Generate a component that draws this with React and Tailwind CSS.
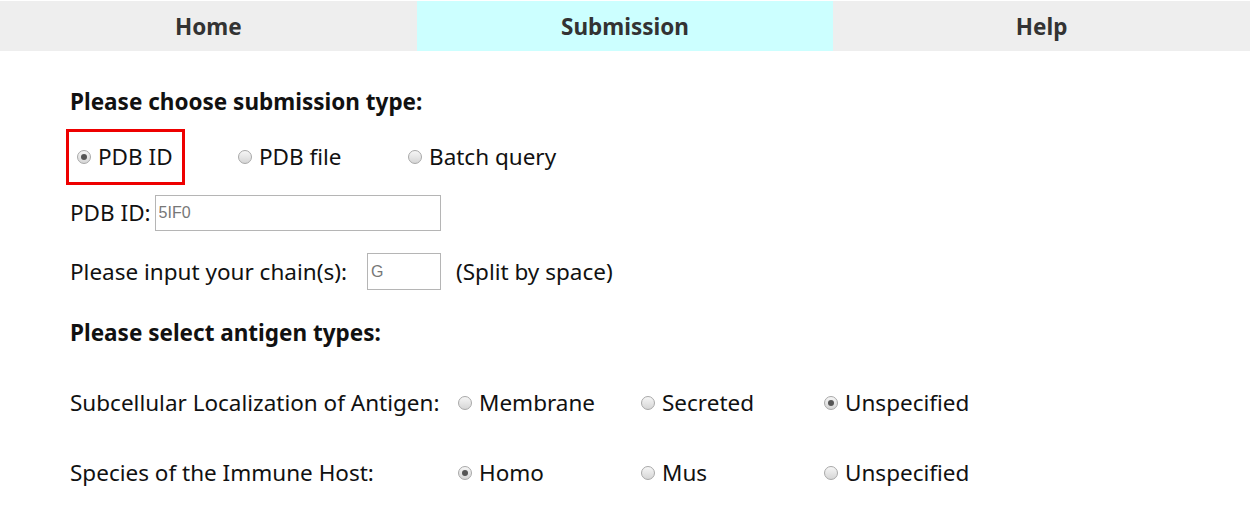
import { useState } from "react";

const font = { fontFamily: '"Noto Sans", "Open Sans", sans-serif' };

function Radio({ checked, label, onChange }) {
  return (
    <label className="flex items-center gap-[7px] cursor-pointer">
      <span
        className="w-[14px] h-[14px] rounded-full border border-[#a8a8a8] bg-gradient-to-b from-[#f6f6f6] to-[#d6d6d6] flex items-center justify-center"
        onClick={onChange}
      >
        {checked && <span className="w-[6px] h-[6px] rounded-full bg-[#555]" />}
      </span>
      <span>{label}</span>
    </label>
  );
}

function RadioRow({ title, options, value, setValue }) {
  return (
    <div className="flex items-center h-[40px]">
      <div className="w-[388px] shrink-0">{title}</div>
      {options.map((o) => (
        <div key={o} className="w-[183px]">
          <Radio checked={value === o} label={o} onChange={() => setValue(o)} />
        </div>
      ))}
    </div>
  );
}

export default function App() {
  const [type, setType] = useState("PDB ID");
  const [loc, setLoc] = useState("Unspecified");
  const [host, setHost] = useState("Homo");
  const tabs = ["Home", "Submission", "Help"];

  return (
    <div className="bg-white min-h-[520px] text-[#111] text-[22.5px] leading-[30px]" style={font}>
      <nav className="grid grid-cols-3 bg-[#eeeeee] mt-[1px] h-[50px]">
        {tabs.map((t) => (
          <a
            key={t}
            className={
              "flex items-center justify-center pt-[1px] font-bold text-[22.5px] text-[#333] " +
              (t === "Submission" ? "bg-[#ccffff]" : "")
            }
          >
            {t}
          </a>
        ))}
      </nav>

      <div className="pl-[70px] pt-[36px]">
        <h2 className="font-bold leading-[30px]">Please choose submission type:</h2>

        <div className="flex items-center mt-[12px] h-[56px] -ml-[4px]">
          <div className="border-[3px] border-[#ee0000] h-[56px] w-[119px] flex items-center pl-[8px]">
            <Radio checked={type === "PDB ID"} label="PDB ID" onChange={() => setType("PDB ID")} />
          </div>
          <div className="ml-[53px] w-[170px]">
            <Radio checked={type === "PDB file"} label="PDB file" onChange={() => setType("PDB file")} />
          </div>
          <div>
            <Radio checked={type === "Batch query"} label="Batch query" onChange={() => setType("Batch query")} />
          </div>
        </div>

        <div className="flex items-center mt-[10px] h-[36px]">
          <span>PDB ID:</span>
          <input
            defaultValue="5IF0"
            className="ml-[4px] w-[286px] h-[36px] border border-[#b5b5b5] px-[3px] text-[16px] text-[#777] outline-none"
            style={{ fontFamily: '"Liberation Sans", Arial, sans-serif' }}
          />
        </div>

        <div className="flex items-center mt-[22px] h-[37px]">
          <span>Please input your chain(s):</span>
          <input
            defaultValue="G"
            className="ml-[20px] w-[74px] h-[37px] border border-[#b5b5b5] px-[3px] text-[16px] text-[#777] outline-none"
            style={{ fontFamily: '"Liberation Sans", Arial, sans-serif' }}
          />
          <span className="ml-[15px]">(Split by space)</span>
        </div>

        <h2 className="font-bold leading-[30px] mt-[28px]">Please select antigen types:</h2>

        <div className="mt-[35px]">
          <RadioRow
            title="Subcellular Localization of Antigen:"
            options={["Membrane", "Secreted", "Unspecified"]}
            value={loc}
            setValue={setLoc}
          />
        </div>
        <div className="mt-[30px]">
          <RadioRow
            title="Species of the Immune Host:"
            options={["Homo", "Mus", "Unspecified"]}
            value={host}
            setValue={setHost}
          />
        </div>
      </div>
    </div>
  );
}
